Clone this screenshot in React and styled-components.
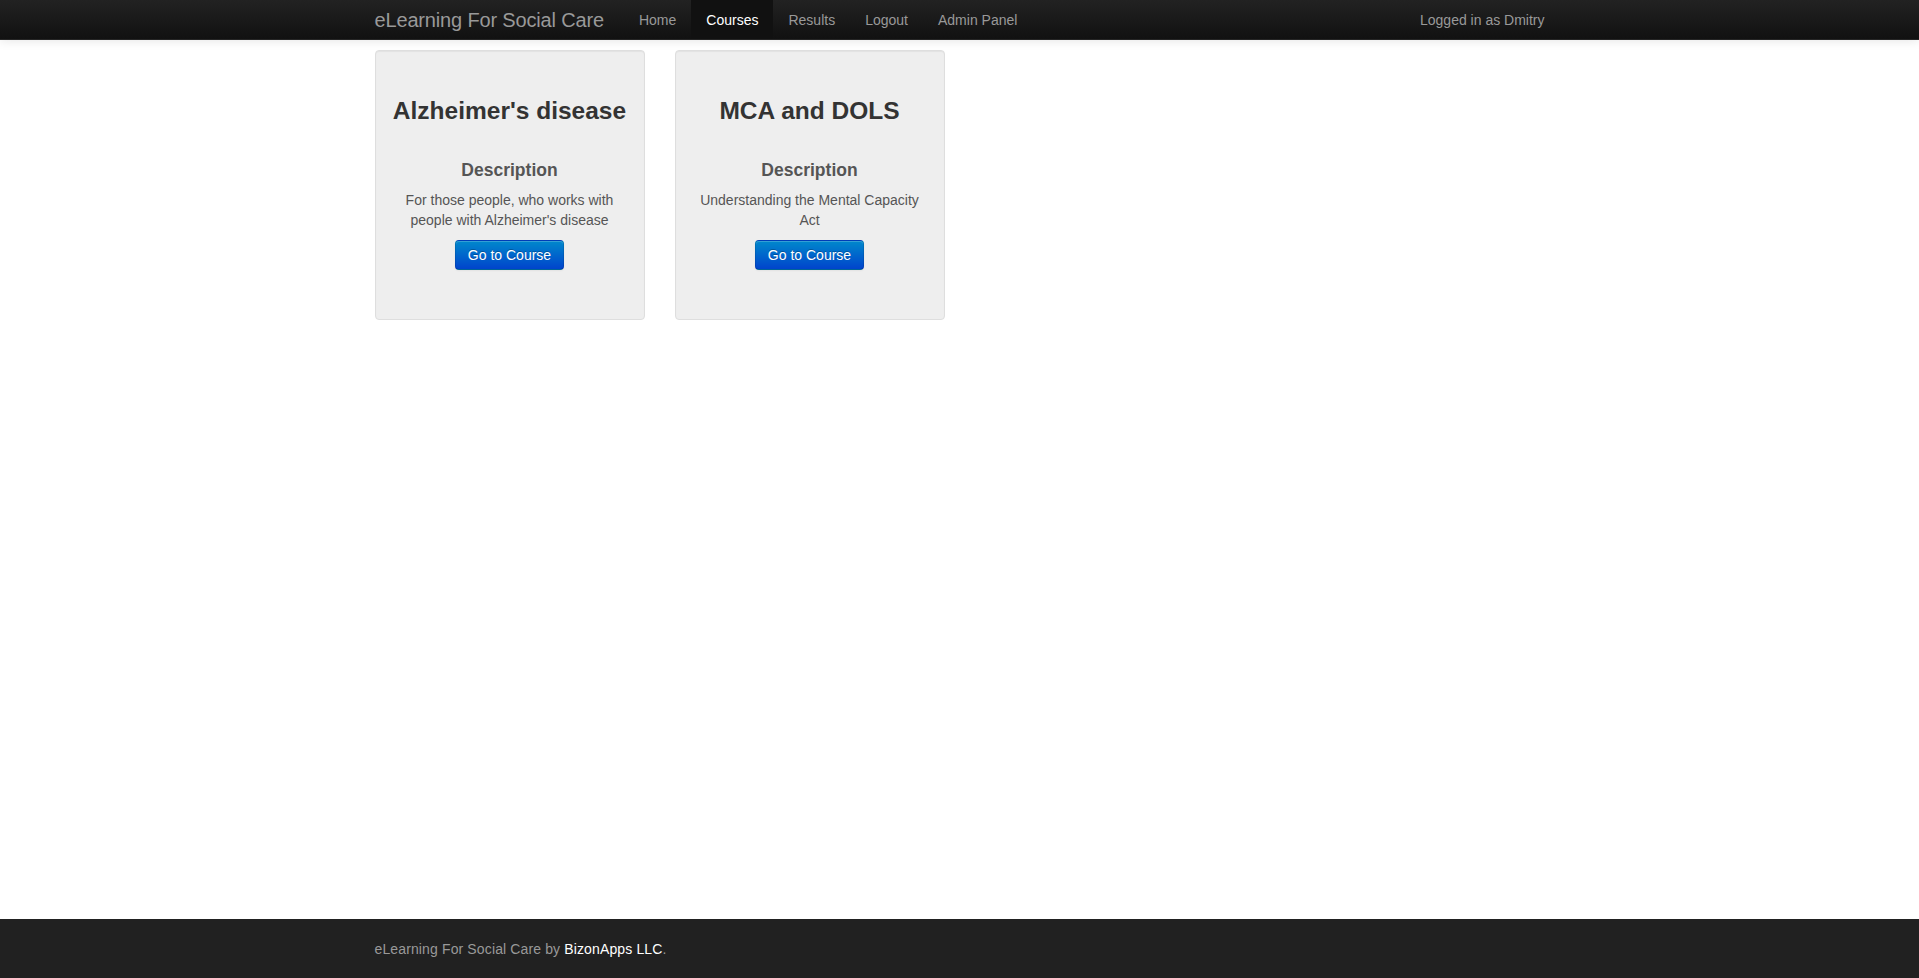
import React from "react";
import styled, { createGlobalStyle } from "styled-components";

const Global = createGlobalStyle`
  html, body { margin: 0; padding: 0; }
  body {
    font-family: "Liberation Sans", Arial, Helvetica, sans-serif;
    font-size: 14px;
    line-height: 20px;
    color: #333;
    background: #fff;
  }
  * { box-sizing: border-box; }
`;

const Page = styled.div`
  min-height: 100vh;
  display: flex;
  flex-direction: column;
`;

const Navbar = styled.header`
  height: 40px;
  background: linear-gradient(to bottom, #222222, #111111);
  border-bottom: 1px solid #252525;
  box-shadow: 0 1px 10px rgba(0, 0, 0, 0.1);
`;

const Container = styled.div`
  width: 1170px;
  margin: 0 auto;
`;

const NavInner = styled(Container)`
  display: flex;
  align-items: stretch;
  height: 39px;
`;

const Brand = styled.a`
  display: block;
  padding: 10px 20px;
  margin-left: -20px;
  font-size: 20px;
  font-weight: 200;
  line-height: 20px;
  letter-spacing: -0.16px;
  color: #999;
  text-decoration: none;
`;

const NavList = styled.nav`
  display: flex;
`;

const NavLink = styled.a`
  display: block;
  padding: 10px 15px;
  line-height: 20px;
  color: ${(p) => (p.$active ? "#fff" : "#999")};
  background: ${(p) => (p.$active ? "#111" : "transparent")};
  text-decoration: none;
`;

const NavText = styled.p`
  margin: 0 0 0 auto;
  line-height: 40px;
  color: #999;
`;

const Main = styled(Container)`
  flex: 1;
  padding-top: 10px;
`;

const Row = styled.div`
  display: flex;
  gap: 30px;
`;

const Well = styled.div`
  width: 270px;
  height: 270px;
  padding: 19px;
  background: #eeeeee;
  border: 1px solid #dedede;
  border-radius: 4px;
  box-shadow: inset 0 1px 1px rgba(0, 0, 0, 0.05);
  text-align: center;
`;

const Title = styled.h3`
  margin: 21px -10px 29px;
  font-size: 24.5px;
  font-weight: bold;
  line-height: 40px;
  white-space: nowrap;
  color: #333;
`;

const SubTitle = styled.h4`
  margin: 0 0 10px;
  font-size: 17.5px;
  font-weight: bold;
  line-height: 20px;
  color: #555;
`;

const Text = styled.p`
  margin: 0 0 10px;
  color: #555;
`;

const Button = styled.a`
  display: inline-block;
  padding: 4px 12px;
  font-size: 14px;
  line-height: 20px;
  color: #fff;
  text-decoration: none;
  text-shadow: 0 -1px 0 rgba(0, 0, 0, 0.25);
  background-color: #006dcc;
  background-image: linear-gradient(to bottom, #0088cc, #0044cc);
  border: 1px solid rgba(0, 0, 0, 0.1);
  border-bottom-color: rgba(0, 0, 0, 0.25);
  border-radius: 4px;
  box-shadow: inset 0 1px 0 rgba(255, 255, 255, 0.2), 0 1px 2px rgba(0, 0, 0, 0.05);
`;

const Footer = styled.footer`
  background: #212121;
  padding: 20px 0 19px;
  color: #999;
  letter-spacing: 0.13px;
`;

const FooterLink = styled.a`
  color: #fff;
  text-decoration: none;
`;

const courses = [
  {
    title: "Alzheimer's disease",
    desc: "For those people, who works with people with Alzheimer's disease",
  },
  { title: "MCA and DOLS", desc: "Understanding the Mental Capacity Act" },
];

export default function App() {
  return (
    <Page>
      <Global />
      <Navbar>
        <NavInner>
          <Brand href="#">eLearning For Social Care</Brand>
          <NavList>
            <NavLink href="#">Home</NavLink>
            <NavLink href="#" $active>
              Courses
            </NavLink>
            <NavLink href="#">Results</NavLink>
            <NavLink href="#">Logout</NavLink>
            <NavLink href="#">Admin Panel</NavLink>
          </NavList>
          <NavText>Logged in as Dmitry</NavText>
        </NavInner>
      </Navbar>
      <Main>
        <Row>
          {courses.map((c) => (
            <Well key={c.title}>
              <Title>{c.title}</Title>
              <SubTitle>Description</SubTitle>
              <Text>{c.desc}</Text>
              <Button href="#">Go to Course</Button>
            </Well>
          ))}
        </Row>
      </Main>
      <Footer>
        <Container>
          eLearning For Social Care by <FooterLink href="#">BizonApps LLC</FooterLink>.
        </Container>
      </Footer>
    </Page>
  );
}
